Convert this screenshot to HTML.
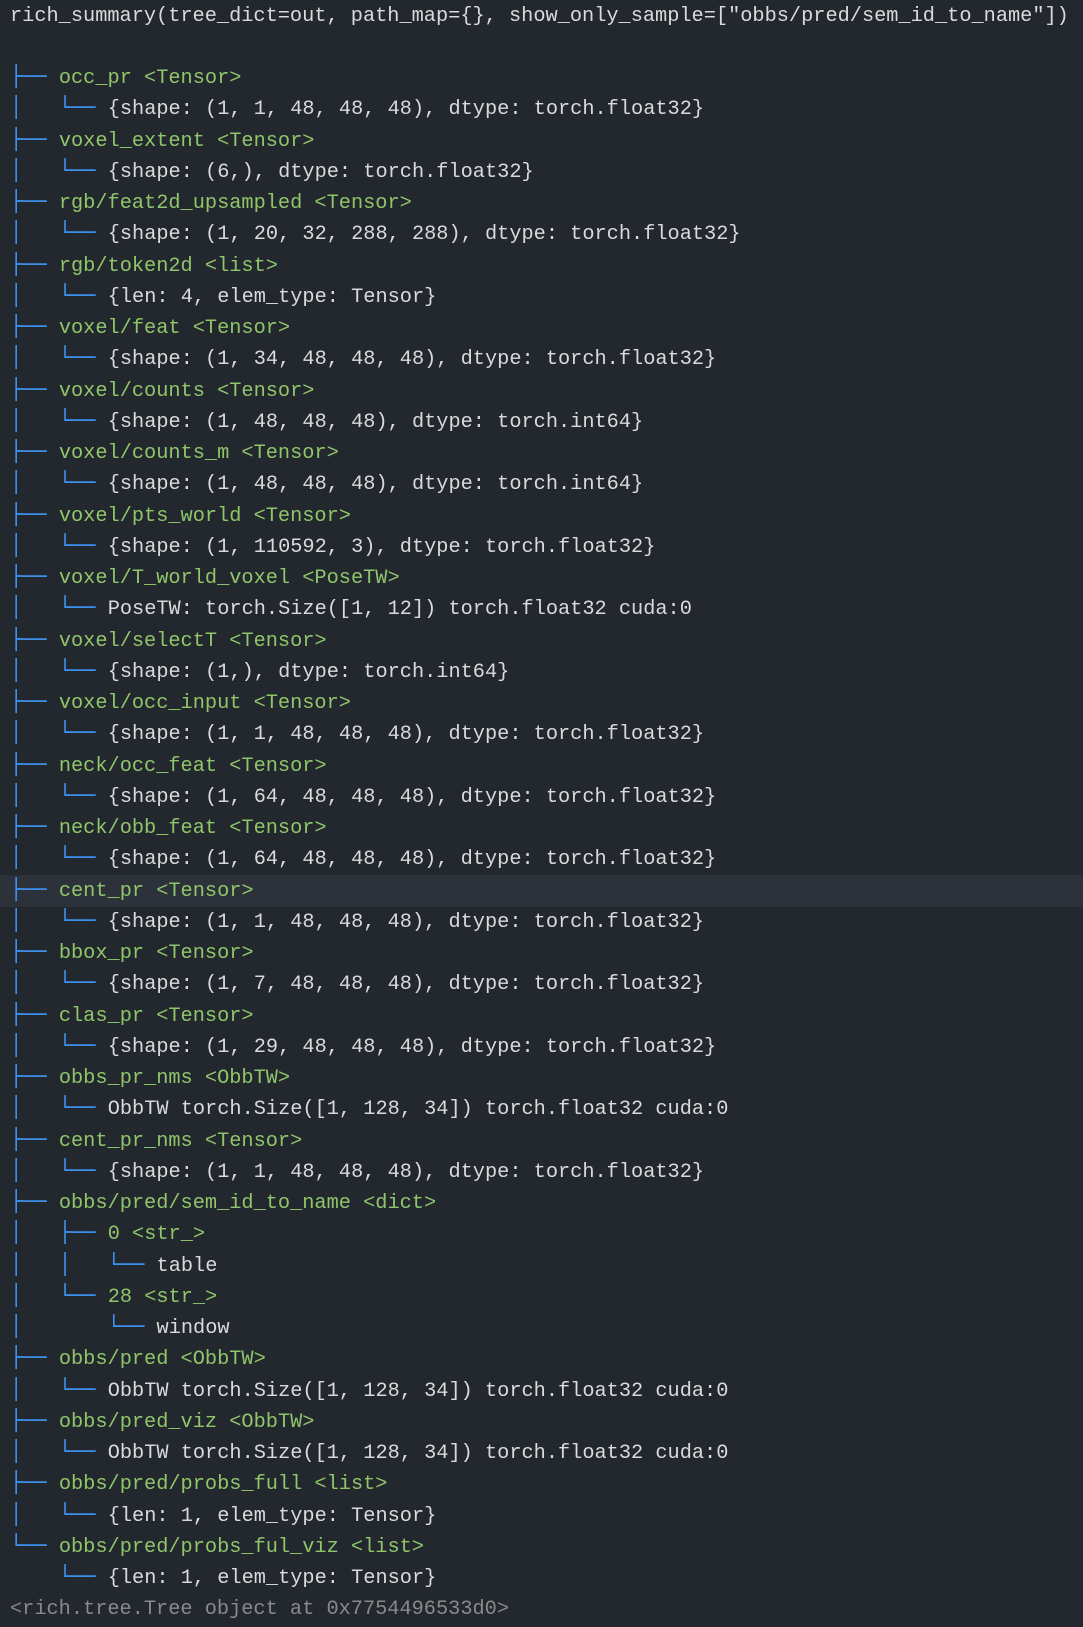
<!DOCTYPE html>
<html><head><meta charset="utf-8"><style>
html,body{margin:0;padding:0;background:#23272e;width:1083px;height:1627px;overflow:hidden}
pre{margin:0;padding:0.5px 0 0 10px;font-family:"Liberation Mono","DejaVu Sans Mono",monospace;font-size:20.3px;line-height:31.25px;color:#dadada;position:relative;z-index:1}
.b{color:#3d93f0;font-family:"DejaVu Sans Mono",monospace;font-weight:bold;line-height:0}.g{color:#8fc66a}.d{color:#8a8a8a}
.hl{position:absolute;left:0;top:875px;width:1083px;height:32px;background:#2c313a;z-index:0}
</style></head><body><div class="hl"></div><pre>rich_summary(tree_dict=out, path_map={}, show_only_sample=["obbs/pred/sem_id_to_name"])

<span class="b">├── </span><span class="g">occ_pr &lt;Tensor&gt;</span>
<span class="b">│   └── </span>{shape: (1, 1, 48, 48, 48), dtype: torch.float32}
<span class="b">├── </span><span class="g">voxel_extent &lt;Tensor&gt;</span>
<span class="b">│   └── </span>{shape: (6,), dtype: torch.float32}
<span class="b">├── </span><span class="g">rgb/feat2d_upsampled &lt;Tensor&gt;</span>
<span class="b">│   └── </span>{shape: (1, 20, 32, 288, 288), dtype: torch.float32}
<span class="b">├── </span><span class="g">rgb/token2d &lt;list&gt;</span>
<span class="b">│   └── </span>{len: 4, elem_type: Tensor}
<span class="b">├── </span><span class="g">voxel/feat &lt;Tensor&gt;</span>
<span class="b">│   └── </span>{shape: (1, 34, 48, 48, 48), dtype: torch.float32}
<span class="b">├── </span><span class="g">voxel/counts &lt;Tensor&gt;</span>
<span class="b">│   └── </span>{shape: (1, 48, 48, 48), dtype: torch.int64}
<span class="b">├── </span><span class="g">voxel/counts_m &lt;Tensor&gt;</span>
<span class="b">│   └── </span>{shape: (1, 48, 48, 48), dtype: torch.int64}
<span class="b">├── </span><span class="g">voxel/pts_world &lt;Tensor&gt;</span>
<span class="b">│   └── </span>{shape: (1, 110592, 3), dtype: torch.float32}
<span class="b">├── </span><span class="g">voxel/T_world_voxel &lt;PoseTW&gt;</span>
<span class="b">│   └── </span>PoseTW: torch.Size([1, 12]) torch.float32 cuda:0
<span class="b">├── </span><span class="g">voxel/selectT &lt;Tensor&gt;</span>
<span class="b">│   └── </span>{shape: (1,), dtype: torch.int64}
<span class="b">├── </span><span class="g">voxel/occ_input &lt;Tensor&gt;</span>
<span class="b">│   └── </span>{shape: (1, 1, 48, 48, 48), dtype: torch.float32}
<span class="b">├── </span><span class="g">neck/occ_feat &lt;Tensor&gt;</span>
<span class="b">│   └── </span>{shape: (1, 64, 48, 48, 48), dtype: torch.float32}
<span class="b">├── </span><span class="g">neck/obb_feat &lt;Tensor&gt;</span>
<span class="b">│   └── </span>{shape: (1, 64, 48, 48, 48), dtype: torch.float32}
<span class="b">├── </span><span class="g">cent_pr &lt;Tensor&gt;</span>
<span class="b">│   └── </span>{shape: (1, 1, 48, 48, 48), dtype: torch.float32}
<span class="b">├── </span><span class="g">bbox_pr &lt;Tensor&gt;</span>
<span class="b">│   └── </span>{shape: (1, 7, 48, 48, 48), dtype: torch.float32}
<span class="b">├── </span><span class="g">clas_pr &lt;Tensor&gt;</span>
<span class="b">│   └── </span>{shape: (1, 29, 48, 48, 48), dtype: torch.float32}
<span class="b">├── </span><span class="g">obbs_pr_nms &lt;ObbTW&gt;</span>
<span class="b">│   └── </span>ObbTW torch.Size([1, 128, 34]) torch.float32 cuda:0
<span class="b">├── </span><span class="g">cent_pr_nms &lt;Tensor&gt;</span>
<span class="b">│   └── </span>{shape: (1, 1, 48, 48, 48), dtype: torch.float32}
<span class="b">├── </span><span class="g">obbs/pred/sem_id_to_name &lt;dict&gt;</span>
<span class="b">│   ├── </span><span class="g">0 &lt;str_&gt;</span>
<span class="b">│   │   └── </span>table
<span class="b">│   └── </span><span class="g">28 &lt;str_&gt;</span>
<span class="b">│       └── </span>window
<span class="b">├── </span><span class="g">obbs/pred &lt;ObbTW&gt;</span>
<span class="b">│   └── </span>ObbTW torch.Size([1, 128, 34]) torch.float32 cuda:0
<span class="b">├── </span><span class="g">obbs/pred_viz &lt;ObbTW&gt;</span>
<span class="b">│   └── </span>ObbTW torch.Size([1, 128, 34]) torch.float32 cuda:0
<span class="b">├── </span><span class="g">obbs/pred/probs_full &lt;list&gt;</span>
<span class="b">│   └── </span>{len: 1, elem_type: Tensor}
<span class="b">└── </span><span class="g">obbs/pred/probs_ful_viz &lt;list&gt;</span>
<span class="b">    └── </span>{len: 1, elem_type: Tensor}
<span class="d">&lt;rich.tree.Tree object at 0x7754496533d0&gt;</span></pre></body></html>
